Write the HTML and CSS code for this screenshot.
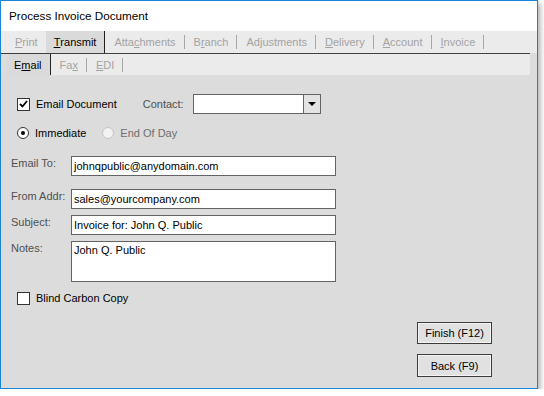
FILE: index.html
```html
<!DOCTYPE html>
<html lang="en">
<head>
    <meta charset="UTF-8">
    <title>Process Invoice Document</title>
    <link rel="stylesheet" href="styles.css">
</head>
<body>

    <div class="window">
        <!-- Title bar -->
        <div class="titlebar">Process Invoice Document</div>

        <!-- Main tabs -->
        <div class="tabs">
            <span class="tab off"><u>P</u>rint</span>
            <span class="tab on"><u>T</u>ransmit</span>
            <span class="sep dark"></span>
            <span class="tab off">Atta<u>c</u>hments</span>
            <span class="sep"></span>
            <span class="tab off">B<u>r</u>anch</span>
            <span class="sep"></span>
            <span class="tab off">Ad<u>j</u>ustments</span>
            <span class="sep"></span>
            <span class="tab off"><u>D</u>elivery</span>
            <span class="sep"></span>
            <span class="tab off"><u>A</u>ccount</span>
            <span class="sep"></span>
            <span class="tab off"><u>I</u>nvoice</span>
            <span class="sep"></span>
        </div>

        <div class="page">
            <!-- Sub tabs -->
            <div class="subtabs">
                <span class="tab on">E<u>m</u>ail</span>
                <span class="sep dark"></span>
                <span class="tab off">Fa<u>x</u></span>
                <span class="sep"></span>
                <span class="tab off"><u>E</u>DI</span>
                <span class="sep"></span>
            </div>
        </div>

        <div class="content">
            <div class="row first">
                <span class="check checked">
                    <svg width="11" height="11" viewBox="0 0 11 11"><path d="M2 5 L4.5 7.5 L9 2" fill="none" stroke="#000" stroke-width="1.8"/></svg>
                </span>
                <span class="text">Email Document</span>
                <span class="label contact">Contact:</span>
                <span class="combo">
                    <span class="combo-btn"><span class="arrow"></span></span>
                </span>
            </div>

            <div class="row radios">
                <span class="radio checked"></span>
                <span class="text">Immediate</span>
                <span class="radio disabled"></span>
                <span class="text off">End Of Day</span>
            </div>

            <div class="field email-to">
                <span class="label">Email To:</span>
                <span class="input">johnqpublic@anydomain.com</span>
            </div>
            <div class="field from">
                <span class="label">From Addr:</span>
                <span class="input">sales@yourcompany.com</span>
            </div>
            <div class="field subject">
                <span class="label">Subject:</span>
                <span class="input">Invoice for: John Q. Public</span>
            </div>
            <div class="field notes">
                <span class="label">Notes:</span>
                <span class="input area">John Q. Public</span>
            </div>

            <div class="row bcc">
                <span class="check"></span>
                <span class="text">Blind Carbon Copy</span>
            </div>

            <div class="buttons">
                <button class="btn">Finish (F12)</button>
                <button class="btn back">Back (F9)</button>
            </div>
        </div>
    </div>

</body>
</html>
```

FILE: styles.css
```css
/* Page */
body {
    margin: 0;
    background: #fff;
    font-family: "Liberation Sans", Arial, sans-serif;
    font-size: 11px;
    color: #000;
}

.window {
    width: 536px;
    height: 387px;
    border: 1px solid #1883d7;
    background: #dcdcdc;
    box-shadow: 2px 3px 6px rgba(0, 0, 0, 0.35);
    display: flex;
    flex-direction: column;
}

/* Title bar */
.titlebar {
    height: 30px;
    background: #fff;
    font-size: 11.7px;
    line-height: 30px;
    padding-left: 8px;
    color: #000;
}

/* Tabs */
.tabs {
    height: 22px;
    background: #ebebeb;
    display: flex;
    align-items: center;
    padding-left: 6px;
}

.tab {
    height: 100%;
    display: flex;
    align-items: center;
    padding: 0 8px;
}

.tab.on {
    background: #dadada;
    color: #000;
}

.tab.off {
    color: #a3a3a3;
}

.sep {
    width: 1px;
    height: 14px;
    background: #a8a8a8;
    margin-right: 1px;
}

.sep.dark {
    height: 100%;
    background: #222;
}

.page {
    width: 529px;
    border-top: 1px solid #404040;
    padding-left: 5px;
    box-sizing: border-box;
}

.subtabs {
    height: 21px;
    background: #ebebeb;
    display: flex;
    align-items: center;
}

/* Content */
.content {
    padding-left: 16px;
    display: flex;
    flex-direction: column;
}

.row {
    display: flex;
    align-items: center;
    height: 20px;
}

.row.first {
    margin-top: 19px;
}

.row.radios {
    margin-top: 9px;
}

.row.bcc {
    margin-top: 6px;
}

.text {
    margin-left: 6px;
}

.text.off {
    color: #6e6e6e;
}

.label {
    color: #505050;
}

.contact {
    margin-left: 26px;
    margin-right: 9px;
}

.check {
    width: 11px;
    height: 11px;
    border: 1px solid #333;
    background: #fff;
    display: flex;
    align-items: center;
    justify-content: center;
}

.check svg {
    display: block;
}

.radio {
    width: 10px;
    height: 10px;
    border: 1px solid #333;
    border-radius: 50%;
    background: #fff;
    display: flex;
    align-items: center;
    justify-content: center;
}

.radio.checked::after {
    content: "";
    width: 4px;
    height: 4px;
    border-radius: 50%;
    background: #000;
}

.radio.disabled {
    border-color: #c4c4c4;
    background: #f2f2f2;
    margin-left: 16px;
}

.combo {
    width: 126px;
    height: 18px;
    border: 1px solid #646464;
    background: #fff;
    display: flex;
    justify-content: flex-end;
}

.combo-btn {
    width: 16px;
    border-left: 1px solid #646464;
    background: #e3e3e3;
    display: flex;
    align-items: center;
    justify-content: center;
}

.arrow {
    width: 0;
    height: 0;
    border-left: 4px solid transparent;
    border-right: 4px solid transparent;
    border-top: 4px solid #000;
}

/* Form fields */
.field {
    display: flex;
    align-items: flex-start;
    margin-left: -6px;
}

.field .label {
    width: 60px;
    padding-top: 1px;
}

.field.email-to {
    margin-top: 13px;
}

.field.from {
    margin-top: 13px;
}

.field.subject,
.field.notes {
    margin-top: 6px;
}

.input {
    width: 261px;
    height: 18px;
    line-height: 18px;
    border: 1px solid #646464;
    background: #fff;
    padding-left: 2px;
}

.input.area {
    height: 39px;
    line-height: 16px;
}

/* Buttons */
.buttons {
    display: flex;
    flex-direction: column;
    align-items: flex-end;
    padding-right: 45px;
    margin-top: 14px;
}

.btn {
    width: 75px;
    height: 22px;
    border: 1px solid #3c3c3c;
    background: #e1e1e1;
    font-family: "Liberation Sans", Arial, sans-serif;
    font-size: 11px;
    color: #000;
    padding: 0;
    box-shadow: inset 0 0 0 1px #f4f4f4;
}

.btn.back {
    height: 23px;
    margin-top: 10px;
}
```
